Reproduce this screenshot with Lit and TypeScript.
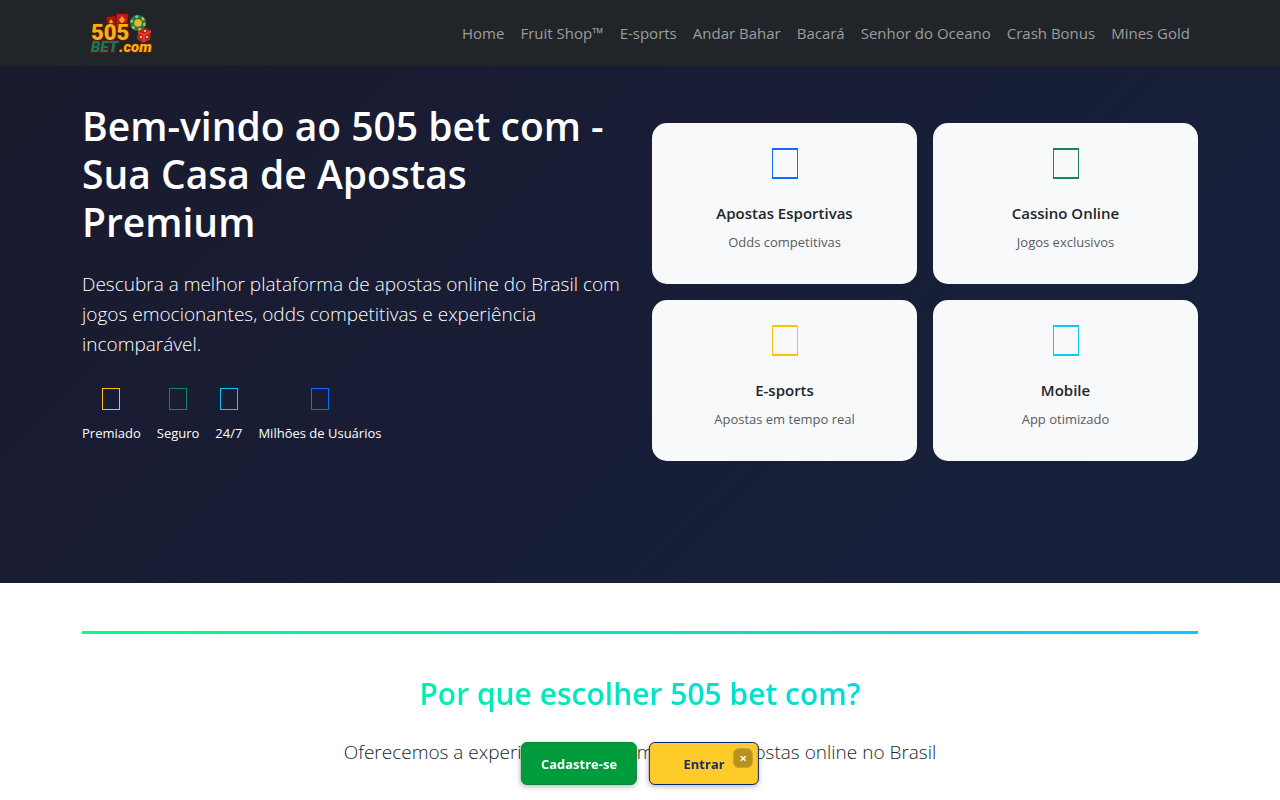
import { LitElement, html, css } from "lit";
import { customElement } from "lit/decorators.js";

const links = ["Home", "Fruit Shop™", "E-sports", "Andar Bahar", "Bacará", "Senhor do Oceano", "Crash Bonus", "Mines Gold"];

const stats = [
  { label: "Premiado", tone: "gold" },
  { label: "Seguro", tone: "green" },
  { label: "24/7", tone: "cyan" },
  { label: "Milhões de Usuários", tone: "blue" },
];

const cards = [
  { title: "Apostas Esportivas", text: "Odds competitivas", tone: "blue" },
  { title: "Cassino Online", text: "Jogos exclusivos", tone: "green" },
  { title: "E-sports", text: "Apostas em tempo real", tone: "gold" },
  { title: "Mobile", text: "App otimizado", tone: "cyan" },
];

@customElement("app-root")
export class AppRoot extends LitElement {
  static styles = css`
    * { box-sizing: border-box; }
    :host {
      display: block;
      height: 100vh;
      overflow: hidden;
      background: #fff;
      color: #212529;
      font: 16px/24px "Segoe UI", "Open Sans", "Noto Sans", sans-serif;
    }
    h1, h2, h3, p { margin: 0; }
    .container { max-width: 1140px; margin: 0 auto; padding: 0 12px; }
    .navbar { background: #212529; }
    .bar { display: flex; align-items: center; justify-content: space-between; height: 66px; }
    .brand { display: flex; padding-left: 8px; }
    .logo { width: 66px; height: 42px; display: block; }
    .links { display: flex; padding-right: 8px; gap: 16px; }
    .link { color: #9b9d9e; text-decoration: none; font-size: 15px; white-space: nowrap; }
    .hero { background: linear-gradient(135deg, #1a1a2e 0%, #16213e 100%); color: #fff; padding: 36px 0 101px; }
    .split { display: grid; grid-template-columns: 1fr 1fr; gap: 24px; align-items: center; }
    .intro { padding-bottom: 38px; }
    .title { font-size: 39px; line-height: 48px; font-weight: 600; margin-bottom: 23px; }
    .lead { font-size: 19px; line-height: 30px; font-weight: 300; }
    .stats { display: flex; gap: 16px; margin-top: 24px; }
    .stat { text-align: center; font-size: 13px; line-height: 21px; white-space: nowrap; }
    .glyph { display: block; margin: 5px auto 13px; width: 18px; height: 22px; border: 1px solid currentColor; }
    .glyph.large { width: 26px; height: 31px; border-width: 2px 1px; margin: 0 auto 22px; }
    .gold { color: #ffc107; }
    .green { color: #198754; }
    .cyan { color: #0dcaf0; }
    .blue { color: #0d6efd; }
    .cards { display: grid; grid-template-columns: 1fr 1fr; gap: 16px; }
    .card { background: #f8f9fa; color: #212529; border-radius: 15px; padding: 25px 24px 31px; text-align: center; }
    .card-title { font-size: 15px; line-height: 24px; font-weight: 600; margin-bottom: 7px; }
    .card-text { font-size: 13px; line-height: 21px; color: #595c5f; }
    .why { padding-top: 48px; text-align: center; }
    .rule { height: 3px; border: 0; margin: 0 0 41px; background: linear-gradient(90deg, #00ff88, #00ccff); }
    .heading {
      font-size: 30px; line-height: 38px; font-weight: 600; margin-bottom: 24px;
      background: linear-gradient(45deg, #00ff88, #00ccff);
      -webkit-background-clip: text; background-clip: text; color: transparent;
    }
    .actions { position: fixed; bottom: 15px; left: 50%; transform: translateX(-50%); display: flex; gap: 12px; }
    .action {
      display: block; border-radius: 6px; height: 43px; padding: 0 19px; font: 700 13px/43px "Segoe UI", "Open Sans", sans-serif;
      text-decoration: none; white-space: nowrap; box-shadow: 0 2px 5px rgba(0, 0, 0, 0.25); text-align: center;
    }
    .join { min-width: 116px; background: #009c3b; border: 1px solid #0b8537; color: #fff; }
    .enter { min-width: 110px; background: #ffcb29; border: 1px solid #002776; color: #1b2f60; }
    .close {
      position: absolute; top: 6px; right: 6px; width: 20px; height: 20px; padding: 0; border-radius: 6px;
      border: 1px solid #c9a43a; background: #b8921e; color: #fff; font: 700 13px/16px "Open Sans", sans-serif;
    }
  `;

  render() {
    return html`
      <nav class="navbar">
        <div class="container bar">
          <a class="brand" href="#" aria-label="505 bet com">
            <svg class="logo" viewBox="0 0 66 42" aria-hidden="true">
              <g stroke="#5c120d">
                <rect x="17" y="4" width="10" height="14" rx="1" fill="#a81513" transform="rotate(-10 22 10)" />
                <rect x="26" y="1.5" width="12" height="15" rx="1" fill="#c71c13" transform="rotate(3 33 8)" />
              </g>
              <path d="M32 4l3 4-3 4-3-4zM21 7l2 3-2 3-2-3z" fill="#f4a51a" />
              <circle cx="48" cy="11" r="8" fill="#157c62" />
              <circle cx="48" cy="11" r="6.5" fill="none" stroke="#e7b527" stroke-width="2.4" stroke-dasharray="2.8 4" />
              <circle cx="48" cy="11" r="3.8" fill="#f2b51d" />
              <path d="M48 19l8-3 5 3-1 9-7 3-6-4z" fill="#c42219" />
              <path d="M48 20l6 3 7-4M54 23v7" fill="none" stroke="#ed594b" />
              <g fill="#ffe3bd"><circle cx="51" cy="25" r="1" /><circle cx="57" cy="25" r="1" /><circle cx="55" cy="19" r="1" /></g>
              <g font-family="Roboto, sans-serif" font-weight="900" stroke="#58210c" stroke-width="1.6" paint-order="stroke">
                <text x="1" y="28" font-size="22" fill="#faae17">505</text>
                <g font-style="italic">
                  <text x="1" y="40" font-size="15" fill="#12795b">BET</text>
                  <text x="29" y="40" font-size="15" fill="#faae17">.com</text>
                </g>
              </g>
            </svg>
          </a>
          <div class="links">${links.map((l) => html`<a class="link" href="#">${l}</a>`)}</div>
        </div>
      </nav>
      <header class="hero">
        <div class="container split">
          <div class="intro">
            <h1 class="title">Bem-vindo ao 505 bet com - Sua Casa de Apostas Premium</h1>
            <p class="lead">Descubra a melhor plataforma de apostas online do Brasil com jogos emocionantes, odds competitivas e experiência incomparável.</p>
            <div class="stats">
              ${stats.map((s) => html`<div class="stat"><span class="glyph ${s.tone}"></span>${s.label}</div>`)}
            </div>
          </div>
          <div class="cards">
            ${cards.map((c) => html`
              <article class="card">
                <span class="glyph large ${c.tone}"></span>
                <h3 class="card-title">${c.title}</h3>
                <p class="card-text">${c.text}</p>
              </article>`)}
          </div>
        </div>
      </header>
      <section class="why">
        <div class="container">
          <hr class="rule" />
          <h2 class="heading">Por que escolher 505 bet com?</h2>
          <p class="lead">Oferecemos a experiência mais completa em apostas online no Brasil</p>
        </div>
      </section>
      <div class="actions">
        <a class="action join" href="#">Cadastre-se</a>
        <a class="action enter" href="#">Entrar</a>
        <button class="close" aria-label="Fechar">×</button>
      </div>
    `;
  }
}
